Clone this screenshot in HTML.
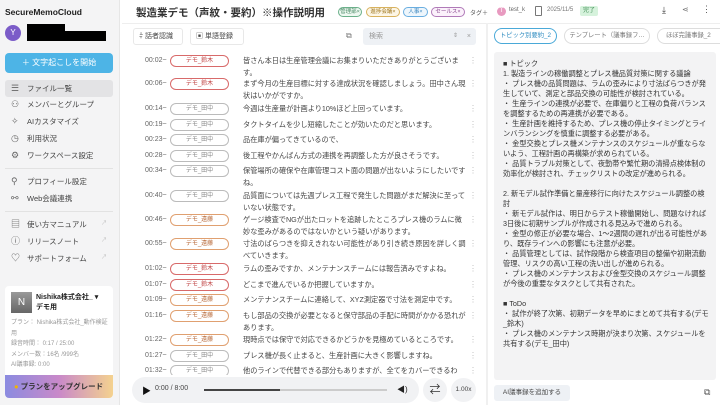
<!DOCTYPE html>
<html><head><meta charset="utf-8"><style>
*{margin:0;padding:0;box-sizing:border-box}
body{width:720px;height:405px;overflow:hidden;background:#fff;font-family:"Liberation Sans","Noto Sans CJK JP",sans-serif;color:#333;position:relative}
.a{position:absolute;white-space:nowrap}
#side{position:absolute;left:0;top:0;width:120px;height:405px;background:#f4f4f5;border-right:1px solid #e6e6e6}
.mi{position:absolute;left:5px;width:108px;height:17px;font-size:7.5px;color:#444;line-height:17px;padding-left:22px}
.mi i{position:absolute;left:6px;top:0;font-style:normal;font-size:9px;color:#666}
.sep{position:absolute;left:5px;width:108px;border-top:1px solid #e2e2e2}
.row{position:absolute;left:133px;width:350px;font-size:7.2px;line-height:11.5px;color:#444}
.row .t{position:absolute;left:12px;top:0;color:#666;font-size:7px}
.row .b{position:absolute;left:37px;top:0;width:59px;height:12px;border:1px solid #bbb;border-radius:6px;font-size:6px;line-height:10px;text-align:center;color:#888;background:#fff}
.row .b.s{border-color:#d86a6a;color:#c04545}
.row .b.e{border-color:#e0a070;color:#b86a3a}
.row .x{position:absolute;left:110px;top:0;width:226px;white-space:normal}
.row .k{position:absolute;left:336px;top:0;color:#bbb;font-size:8px}
.tag{position:absolute;top:7px;height:10px;font-size:5.5px;border:1px solid;border-radius:6px;line-height:8px;text-align:center}
#sum{position:absolute;left:494px;top:52px;width:222px;height:328px;background:#f3f3f4;border-radius:3px;padding:7px 6px 0 9px;font-size:7.2px;line-height:10px;color:#333;overflow:hidden}
</style></head><body>
<div id="side">
<div class="a" style="left:5px;top:7px;font-size:8.5px;font-weight:bold;color:#222">SecureMemoCloud</div>
<div class="a" style="left:5px;top:25px;width:16px;height:16px;border-radius:50%;background:#7b5cc8;color:#fff;font-size:8px;text-align:center;line-height:16px">Y</div>
<div class="a" style="left:27px;top:24px;width:38px;height:8px;background:#000"></div>
<div class="a" style="left:27px;top:31px;width:79px;height:10px;background:#000"></div>
<div class="a" style="left:5px;top:53px;width:108px;height:20px;background:#4db4e6;border-radius:4px;color:#fff;font-size:8px;text-align:center;line-height:20px">＋ 文字起こしを開始</div>
<div class="mi" style="top:80px;background:#e3e3e5;border-radius:3px"><i>☰</i>ファイル一覧</div>
<div class="mi" style="top:96px"><i>⚇</i>メンバーとグループ</div>
<div class="mi" style="top:113px"><i>✧</i>AIカスタマイズ</div>
<div class="mi" style="top:130px"><i>◷</i>利用状況</div>
<div class="mi" style="top:147px"><i>⚙</i>ワークスペース設定</div>
<div class="sep" style="top:168px"></div>
<div class="mi" style="top:173px"><i>⚲</i>プロフィール設定</div>
<div class="mi" style="top:190px"><i>⚯</i>Web会議連携</div>
<div class="sep" style="top:211px"></div>
<div class="mi" style="top:216px"><i>▤</i>使い方マニュアル<span style="position:absolute;right:6px;color:#bbb;font-size:6px">↗</span></div>
<div class="mi" style="top:233px"><i>ⓘ</i>リリースノート<span style="position:absolute;right:6px;color:#bbb;font-size:6px">↗</span></div>
<div class="mi" style="top:250px"><i>♡</i>サポートフォーム<span style="position:absolute;right:6px;color:#bbb;font-size:6px">↗</span></div>
<div class="a" style="left:5px;top:286px;width:108px;height:112px;background:#fff;border-radius:4px"></div>
<div class="a" style="left:11px;top:292px;width:21px;height:21px;background:linear-gradient(#999,#666);color:#fff;font-size:10px;text-align:center;line-height:21px">N</div>
<div class="a" style="left:36px;top:293px;font-size:7px;font-weight:bold;line-height:10px;color:#222">Nishika株式会社_ ▾<br>デモ用</div>
<div class="a" style="left:11px;top:318px;font-size:6px;line-height:10.5px;color:#999;white-space:normal;width:100px">プラン： Nishika株式会社_動作検証用<br>録音時間： 0:17 / 25:00<br>メンバー数：16名 /999名<br>AI議事録: 0:00</div>
<div class="a" style="left:5px;top:375px;width:108px;height:23px;border-radius:0 0 4px 4px;background:linear-gradient(90deg,#8b8be0,#c989c9,#f4d28f);font-size:7.5px;font-weight:bold;color:#333;line-height:23px;padding-left:9px"><span style="color:#f0b400">●</span> プランをアップグレード</div>
</div>

<div class="a" style="left:136px;top:5px;font-size:10.5px;font-weight:bold;color:#333">製造業デモ（声紋・要約）※操作説明用</div>
<span class="tag" style="left:338px;width:24px;border-color:#6bb08a;color:#4a8a66;background:#eef8f1">管理部×</span>
<span class="tag" style="left:366px;width:34px;border-color:#d8b25e;color:#a07820;background:#fdf6e6">進捗会議×</span>
<span class="tag" style="left:403px;width:25px;border-color:#6aaee0;color:#3d88c0;background:#eef6fc">人事×</span>
<span class="tag" style="left:431px;width:34px;border-color:#b07ab8;color:#8a4a90;background:#fbf1fb">セールス×</span>
<span class="a" style="left:470px;top:8px;font-size:6px;color:#555">タグ＋</span>
<div class="a" style="left:497px;top:7px;width:9px;height:9px;border-radius:50%;background:#e89ac0;font-size:6px;color:#fff;text-align:center;line-height:9px">T</div>
<div class="a" style="left:509px;top:7px;font-size:6px;color:#666">test_k</div>
<div class="a" style="left:535px;top:6px;width:7px;height:10px;border:1px solid #777;border-radius:1px"></div>
<div class="a" style="left:547px;top:7px;font-size:6px;color:#777">2025/11/5</div>
<div class="a" style="left:580px;top:6px;width:18px;height:10px;background:#d6f2dc;color:#3a8a50;font-size:6px;text-align:center;line-height:10px;border-radius:2px">完了</div>
<div class="a" style="left:662px;top:5px;font-size:9px;color:#333">⤓</div>
<div class="a" style="left:682px;top:5px;font-size:8px;color:#777">⋖</div>
<div class="a" style="left:702px;top:4px;font-size:9px;color:#555">⋮</div>
<div class="a" style="left:122px;top:23px;width:598px;border-top:1px solid #eee"></div>
<div class="a" style="left:486px;top:23px;width:2px;height:382px;background:#f0f0f0"></div>

<div class="a" style="left:133px;top:28px;width:50px;height:17px;border:1px solid #e8e8e8;border-radius:3px;font-size:7px;line-height:15px;padding-left:5px;color:#444">⫩ 話者認識</div>
<div class="a" style="left:190px;top:28px;width:54px;height:17px;border:1px solid #e8e8e8;border-radius:3px;font-size:7px;line-height:15px;padding-left:5px;color:#444">▣ 単語登録</div>
<div class="a" style="left:346px;top:31px;font-size:8px;color:#777">⧉</div>
<div class="a" style="left:363px;top:28px;width:113px;height:17px;background:#eef1f5;border-radius:3px;font-size:7px;color:#999;line-height:17px;padding-left:6px">検索<span style="position:absolute;right:18px;font-size:6px">⇕</span><span style="position:absolute;right:5px">×</span></div>

<div class="row" style="top:55px"><span class="t">00:02~</span><span class="b s">デモ_鈴木</span><div class="x">皆さん本日は生産管理会議にお集まりいただきありがとうございます。</div><span class="k">⋮</span></div>
<div class="row" style="top:78px"><span class="t">00:06~</span><span class="b s">デモ_鈴木</span><div class="x">まず今月の生産目標に対する達成状況を確認しましょう。田中さん現状はいかがですか。</div><span class="k">⋮</span></div>
<div class="row" style="top:103px"><span class="t">00:14~</span><span class="b">デモ_田中</span><div class="x">今週は生産量が計画より10%ほど上回っています。</div><span class="k">⋮</span></div>
<div class="row" style="top:119px"><span class="t">00:19~</span><span class="b">デモ_田中</span><div class="x">タクトタイムを少し短縮したことが効いたのだと思います。</div><span class="k">⋮</span></div>
<div class="row" style="top:134px"><span class="t">00:23~</span><span class="b">デモ_田中</span><div class="x">品在庫が偏ってきているので、</div><span class="k">⋮</span></div>
<div class="row" style="top:150px"><span class="t">00:28~</span><span class="b">デモ_田中</span><div class="x">後工程やかんばん方式の連携を再調整した方が良さそうです。</div><span class="k">⋮</span></div>
<div class="row" style="top:165px"><span class="t">00:34~</span><span class="b">デモ_田中</span><div class="x">保管場所の確保や在庫管理コスト面の問題が出ないようにしたいですね。</div><span class="k">⋮</span></div>
<div class="row" style="top:190px"><span class="t">00:40~</span><span class="b">デモ_田中</span><div class="x">品質面については先週プレス工程で発生した問題がまだ解決に至っていない状態です。</div><span class="k">⋮</span></div>
<div class="row" style="top:214px"><span class="t">00:46~</span><span class="b e">デモ_遠藤</span><div class="x">ゲージ検査でNGが出たロットを追跡したところプレス機のラムに微妙な歪みがあるのではないかという疑いがあります。</div><span class="k">⋮</span></div>
<div class="row" style="top:238px"><span class="t">00:55~</span><span class="b e">デモ_遠藤</span><div class="x">寸法のばらつきを抑えきれない可能性があり引き続き原因を詳しく調べていきます。</div><span class="k">⋮</span></div>
<div class="row" style="top:263px"><span class="t">01:02~</span><span class="b s">デモ_鈴木</span><div class="x">ラムの歪みですか、メンテナンスチームには報告済みですよね。</div><span class="k">⋮</span></div>
<div class="row" style="top:279px"><span class="t">01:07~</span><span class="b s">デモ_鈴木</span><div class="x">どこまで進んでいるか把握していますか。</div><span class="k">⋮</span></div>
<div class="row" style="top:294px"><span class="t">01:09~</span><span class="b e">デモ_遠藤</span><div class="x">メンテナンスチームに連絡して、XYZ測定器で寸法を測定中です。</div><span class="k">⋮</span></div>
<div class="row" style="top:310px"><span class="t">01:16~</span><span class="b e">デモ_遠藤</span><div class="x">もし部品の交換が必要となると保守部品の手配に時間がかかる恐れがあります。</div><span class="k">⋮</span></div>
<div class="row" style="top:334px"><span class="t">01:22~</span><span class="b e">デモ_遠藤</span><div class="x">現時点では保守で対応できるかどうかを見極めているところです。</div><span class="k">⋮</span></div>
<div class="row" style="top:350px"><span class="t">01:27~</span><span class="b">デモ_田中</span><div class="x">プレス機が長く止まると、生産計画に大きく影響しますね。</div><span class="k">⋮</span></div>
<div class="row" style="top:365px;height:10px;overflow:hidden"><span class="t">01:32~</span><span class="b">デモ_田中</span><div class="x">他のラインで代替できる部分もありますが、全てをカバーできるわ</div><span class="k">⋮</span></div>

<div class="a" style="left:132px;top:377px;width:287px;height:26px;background:#f1f2f4;border-radius:13px"></div>
<div class="a" style="left:142px;top:384px;font-size:9px;color:#111">▶</div>
<div class="a" style="left:155px;top:385px;font-size:7px;color:#444">0:00 / 8:00</div>
<div class="a" style="left:204px;top:389px;width:183px;height:2px;background:#ccc"></div>
<div class="a" style="left:204px;top:389px;width:76px;height:2px;background:#444"></div>
<div class="a" style="left:397px;top:384px;font-size:8px;color:#222">◀)</div>
<div class="a" style="left:423px;top:378px;width:24px;height:24px;background:#f1f2f4;border-radius:50%;text-align:center;line-height:24px;font-size:11px;color:#333">⇄</div>
<div class="a" style="left:451px;top:378px;width:25px;height:24px;background:#f1f2f4;border-radius:50%;text-align:center;line-height:24px;font-size:6.5px;color:#444">1.00x</div>

<div class="a" style="left:494px;top:28px;width:63px;height:16px;border:1px solid #4aa9d8;border-radius:8px;font-size:6.3px;color:#2d8bc0;text-align:center;line-height:14px">トピック別要約_2</div>
<div class="a" style="left:564px;top:28px;width:86px;height:16px;border:1px solid #ddd;border-radius:8px;font-size:6.3px;color:#777;text-align:center;line-height:14px">テンプレート（議事録フ…</div>
<div class="a" style="left:657px;top:28px;width:63px;height:16px;border:1px solid #ddd;border-radius:8px 0 0 8px;border-right:none;font-size:6.3px;color:#777;line-height:14px;padding-left:8px">ほぼ完議事録_2</div>

<div id="sum">■ トピック<br>1. 製造ラインの稼働調整とプレス機品質対策に関する議論<br>・ プレス機の品質問題は、ラムの歪みにより寸法ばらつきが発生していて、測定と部品交換の可能性が検討されている。<br>・ 生産ラインの連携が必要で、在庫偏りと工程の負荷バランスを調整するための再連携が必要である。<br>・ 生産計画を維持するため、プレス機の停止タイミングとラインバランシングを慎重に調整する必要がある。<br>・ 金型交換とプレス機メンテナンスのスケジュールが重ならないよう、工程計画の再構築が求められている。<br>・ 品質トラブル対策として、夜勤帯や繁忙期の清掃点検体制の効率化が検討され、チェックリストの改定が進められる。<br><br>2. 新モデル試作準備と量産移行に向けたスケジュール調整の検討<br>・ 新モデル試作は、明日からテスト稼働開始し、問題なければ3日後に初期サンプルが作成される見込みで進められる。<br>・ 金型の修正が必要な場合、1～2週間の遅れが出る可能性があり、既存ラインへの影響にも注意が必要。<br>・ 品質管理としては、試作段階から検査項目の整備や初期流動管理、リスクの高い工程の洗い出しが進められる。<br>・ プレス機のメンテナンスおよび金型交換のスケジュール調整が今後の重要なタスクとして共有された。<br><br>■ ToDo<br>・ 試作が終了次第、初期データを早めにまとめて共有する(デモ_鈴木)<br>・ プレス機のメンテナンス時期が決まり次第、スケジュールを共有する(デモ_田中)</div>
<div class="a" style="left:494px;top:385px;width:76px;height:16px;background:#eef1f5;border-radius:3px;font-size:6.5px;color:#444;text-align:center;line-height:16px">AI議事録を追加する</div>
<div class="a" style="left:704px;top:387px;font-size:9px;color:#555">⧉</div>
</body></html>
